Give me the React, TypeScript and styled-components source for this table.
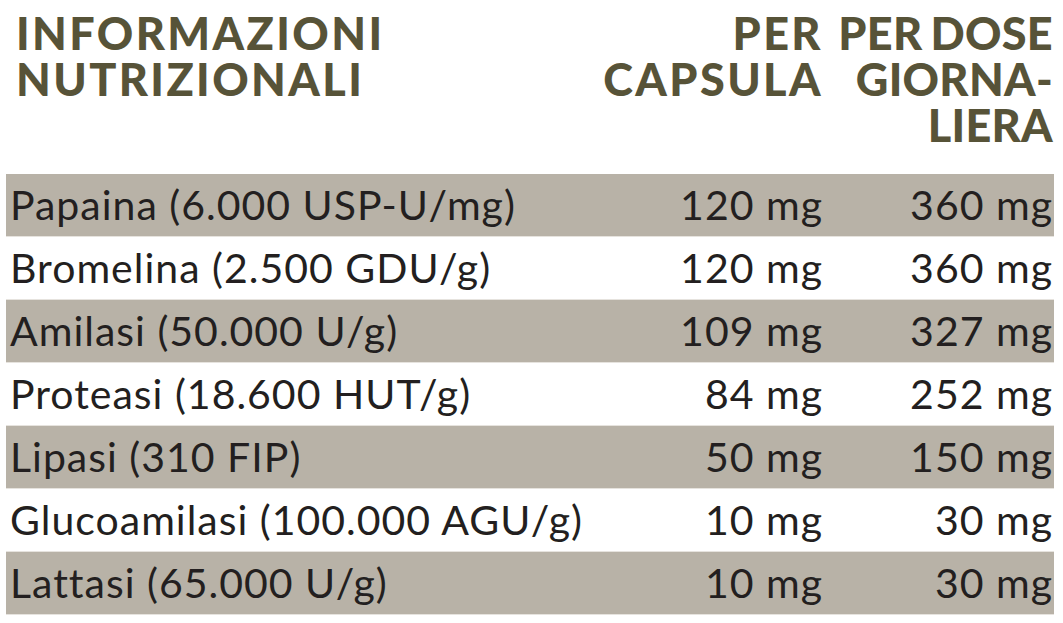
import React from 'react';
import styled, { createGlobalStyle } from 'styled-components';

const GlobalStyle = createGlobalStyle`
  html, body {
    margin: 0;
    padding: 0;
    background: #ffffff;
  }
`;

const Page = styled.div`
  width: 1063px;
  height: 623px;
  padding: 0 9px 0 6px;
  box-sizing: border-box;
  overflow: hidden;
`;

const Grid = styled.div`
  display: grid;
  grid-template-columns: 1fr 230px 230px;
  padding: 0 1px 0 4px;
`;

const Header = styled(Grid)`
  height: 174px;
  padding-top: 10px;
  box-sizing: border-box;
  align-items: start;
`;

const HeadCell = styled.div<{ $right?: boolean; $tight?: boolean }>`
  font-family: Lato, 'Liberation Sans', sans-serif;
  font-weight: 900;
  font-size: 45px;
  line-height: 46px;
  letter-spacing: ${p => (p.$tight ? '0.3px' : '2.4px')};
  word-spacing: -3px;
  color: #575338;
  text-transform: uppercase;
  white-space: nowrap;
  text-align: ${p => (p.$right ? 'right' : 'left')};
  padding-left: ${p => (p.$right ? '0' : '6px')};
`;

const Row = styled(Grid)<{ $shaded?: boolean }>`
  height: 62px;
  align-items: center;
  background: ${p => (p.$shaded ? '#b8b2a7' : '#ffffff')};
  border-bottom: 1px solid #e6e3de;
`;

const Cell = styled.div<{ $right?: boolean }>`
  font-family: Lato, 'Liberation Sans', sans-serif;
  font-weight: 400;
  font-size: 41px;
  line-height: 62px;
  letter-spacing: 1px;
  color: #231f20;
  white-space: nowrap;
  padding-bottom: 4px;
  text-align: ${p => (p.$right ? 'right' : 'left')};
`;

interface Item {
  name: string;
  capsule: string;
  daily: string;
}

const items: Item[] = [
  { name: 'Papaina (6.000 USP-U/mg)', capsule: '120 mg', daily: '360 mg' },
  { name: 'Bromelina (2.500 GDU/g)', capsule: '120 mg', daily: '360 mg' },
  { name: 'Amilasi (50.000 U/g)', capsule: '109 mg', daily: '327 mg' },
  { name: 'Proteasi (18.600 HUT/g)', capsule: '84 mg', daily: '252 mg' },
  { name: 'Lipasi (310 FIP)', capsule: '50 mg', daily: '150 mg' },
  { name: 'Glucoamilasi (100.000 AGU/g)', capsule: '10 mg', daily: '30 mg' },
  { name: 'Lattasi (65.000 U/g)', capsule: '10 mg', daily: '30 mg' },
];

export default function App() {
  return (
    <>
      <GlobalStyle />
      <Page>
        <Header>
          <HeadCell>
            Informazioni
            <br />
            Nutrizionali
          </HeadCell>
          <HeadCell $right>
            Per
            <br />
            Capsula
          </HeadCell>
          <HeadCell $right $tight>
            Per dose
            <br />
            Giorna-
            <br />
            liera
          </HeadCell>
        </Header>
        {items.map((item, i) => (
          <Row key={item.name} $shaded={i % 2 === 0}>
            <Cell>{item.name}</Cell>
            <Cell $right>{item.capsule}</Cell>
            <Cell $right>{item.daily}</Cell>
          </Row>
        ))}
      </Page>
    </>
  );
}
